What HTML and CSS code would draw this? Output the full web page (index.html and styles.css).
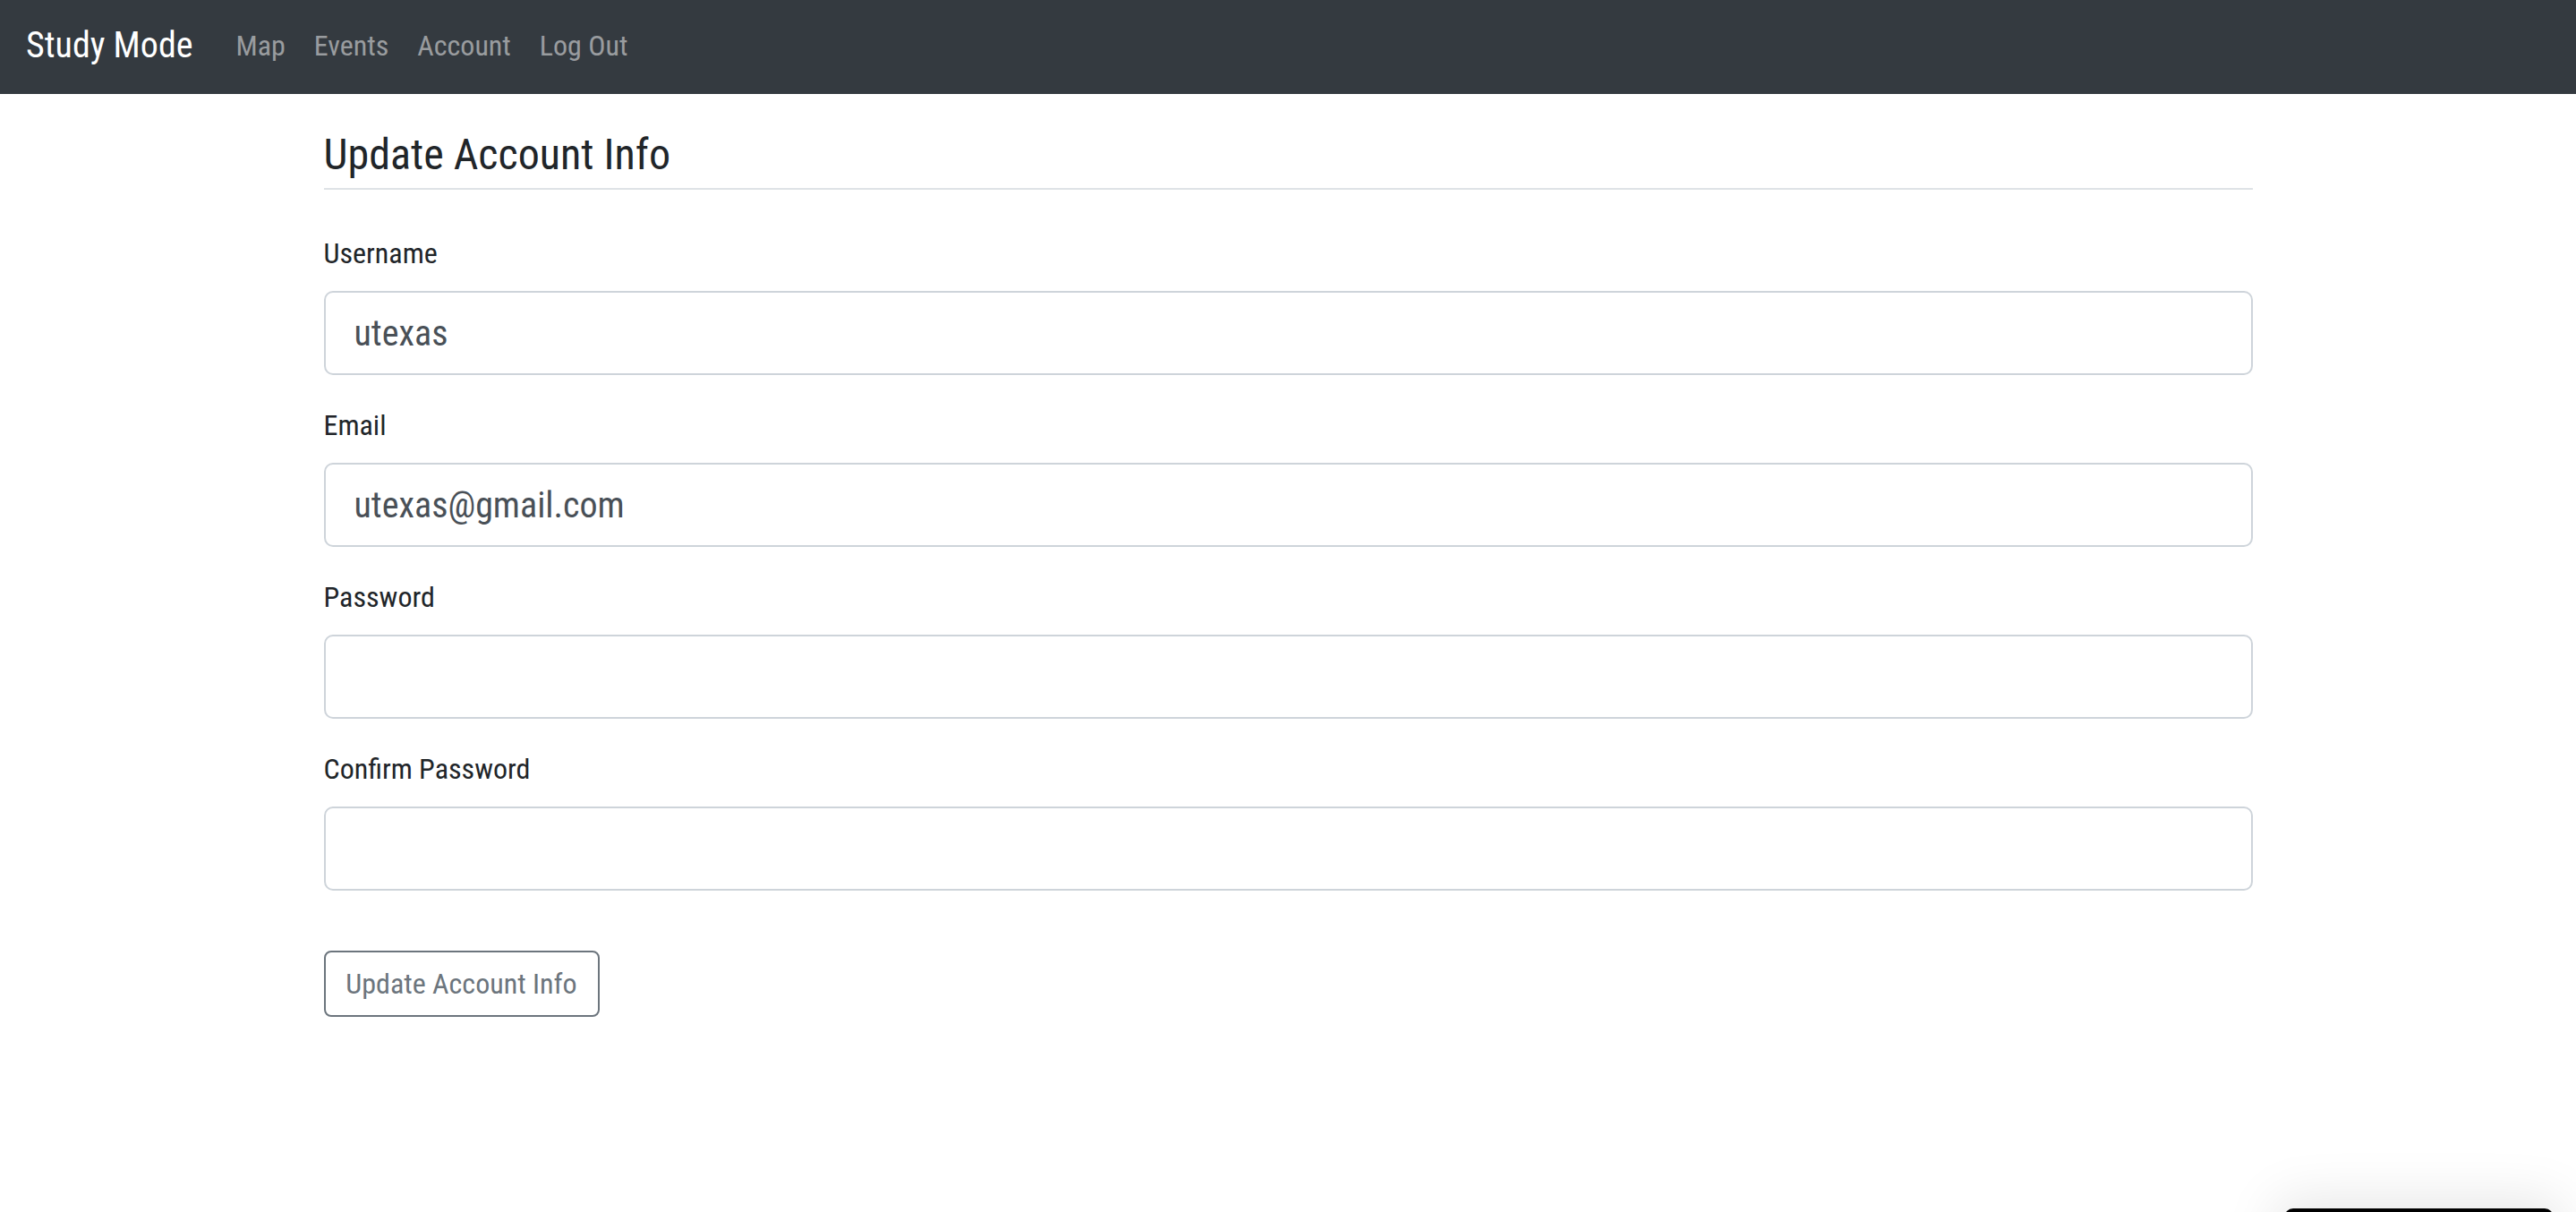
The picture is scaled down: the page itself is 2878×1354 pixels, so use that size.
FILE: index.html
```html
<!DOCTYPE html>
<html lang="en">
<head>
<meta charset="utf-8">
<title>Study Mode - Account</title>
<link rel="stylesheet" href="styles.css">
</head>
<body>
<nav class="navbar">
  <a class="brand" href="#">Study Mode</a>
  <ul class="nav">
    <li><a class="nav-link" href="#">Map</a></li>
    <li><a class="nav-link" href="#">Events</a></li>
    <li><a class="nav-link" href="#">Account</a></li>
    <li><a class="nav-link" href="#">Log Out</a></li>
  </ul>
</nav>
<main class="container">
  <h3 class="title">Update Account Info</h3>
  <form class="form">
    <div class="group">
      <label class="label" for="username">Username</label>
      <input class="control" id="username" type="text" value="utexas">
    </div>
    <div class="group">
      <label class="label" for="email">Email</label>
      <input class="control" id="email" type="text" value="utexas@gmail.com">
    </div>
    <div class="group">
      <label class="label" for="password">Password</label>
      <input class="control" id="password" type="password" value="">
    </div>
    <div class="group">
      <label class="label" for="confirm">Confirm Password</label>
      <input class="control" id="confirm" type="password" value="">
    </div>
    <button class="btn" type="button">Update Account Info</button>
  </form>
</main>
<div class="peek"></div>
</body>
</html>
```
FILE: styles.css
```css
html, body {
  margin: 0;
  padding: 0;
  background: #ffffff;
}
body {
  font-family: Roboto, "Noto Sans", sans-serif;
  font-stretch: 87.5%;
  color: #212529;
  overflow: hidden;
  height: 1354px;
}
.navbar {
  height: 105px;
  background: #343a40;
  display: flex;
  align-items: center;
  padding: 0 0 4px 29px;
  box-sizing: border-box;
}
.brand {
  font-size: 40px;
  color: #ffffff;
  text-decoration: none;
  margin-right: 32px;
  line-height: 1;
}
.nav {
  display: flex;
  list-style: none;
  margin: 0;
  padding: 0;
}
.nav-link {
  display: block;
  padding: 0 16px;
  font-size: 32px;
  color: rgba(255,255,255,0.5);
  text-decoration: none;
  line-height: 1;
}
.container {
  width: 2155px;
  margin: 0 auto;
}
.title {
  margin: 39px 0 0;
  font-size: 48px;
  font-weight: 400;
  line-height: 58px;
  padding-bottom: 8px;
  border-bottom: 2px solid #dee2e6;
}
.form {
  padding-top: 47px;
}
.group {
  margin-bottom: 32px;
}
.label {
  display: block;
  font-size: 32px;
  line-height: 48px;
  margin-bottom: 18px;
}
.control {
  display: block;
  width: 100%;
  box-sizing: border-box;
  height: 94px;
  border: 2px solid #ced4da;
  border-radius: 10px;
  padding: 0 32px;
  font-family: inherit;
  font-stretch: inherit;
  font-size: 40px;
  color: #495057;
  background: #fff;
  outline: none;
}
.btn {
  margin-top: 35px;
  height: 74px;
  width: 308px;
  box-sizing: border-box;
  border: 2px solid #6c757d;
  border-radius: 8px;
  background: #fff;
  color: #6c757d;
  font-family: inherit;
  font-stretch: inherit;
  font-size: 32px;
  padding: 0;
}
.peek {
  position: fixed;
  left: 2552px;
  top: 1350px;
  width: 301px;
  height: 120px;
  background: #000;
  border-radius: 10px 10px 0 0;
  box-shadow: 0 0 60px 10px rgba(0,0,0,0.10);
}
```
